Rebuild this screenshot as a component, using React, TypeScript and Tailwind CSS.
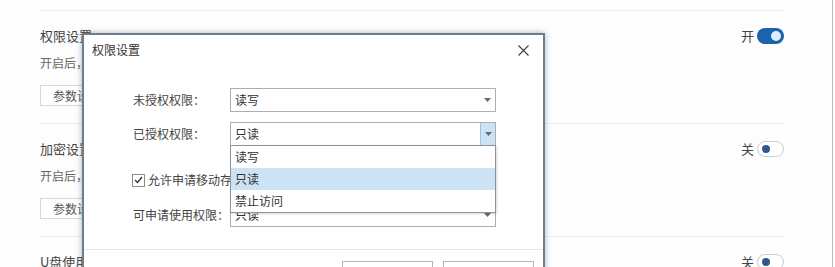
import React from 'react';

interface Section {
  title: string;
  desc: string;
  on: boolean;
  button: boolean;
}

const sections: Section[] = [
  { title: '权限设置', desc: '开启后，将对移动存储设备进行权限控制', on: true, button: true },
  { title: '加密设置', desc: '开启后，将对移动存储设备进行加密', on: false, button: true },
  { title: 'U盘使用', desc: '', on: false, button: false },
];

const Toggle: React.FC<{ on: boolean }> = ({ on }) => (
  <div className="flex items-center gap-[3px] text-[13px] text-[#444]">
    <span>{on ? '开' : '关'}</span>
    {on ? (
      <div className="w-[27px] h-[16px] rounded-full bg-[#1c62ad] flex items-center justify-end pr-[3px]">
        <div className="w-[10px] h-[10px] rounded-full bg-[#dcefff]" />
      </div>
    ) : (
      <div className="w-[27px] h-[16px] rounded-full border border-[#c9ccd0] bg-white flex items-center pl-[4px]">
        <div className="w-[8px] h-[8px] rounded-full bg-[#2c5a8c]" />
      </div>
    )}
  </div>
);

const Arrow: React.FC = () => (
  <svg width="7" height="4" viewBox="0 0 7 4">
    <path d="M0 0 L7 0 L3.5 4 Z" fill="#6b6b6b" />
  </svg>
);

const SelectBox: React.FC<{ value: string; active?: boolean }> = ({ value, active }) => (
  <div className="w-[266px] h-[24px] border border-[#acaeb2] bg-white flex items-center">
    <span className="flex-1 pl-[4px] text-[12px] text-[#333]">{value}</span>
    <div className={`w-[15px] h-full flex items-center justify-center ${active ? 'bg-[#cde3f5] border-l border-[#9fc3e3]' : ''}`}>
      <Arrow />
    </div>
  </div>
);

export default function App() {
  return (
    <div
      className="relative w-[835px] h-[267px] overflow-hidden bg-[#fdfdfd]"
      style={{ fontFamily: '"Noto Sans CJK SC", "Liberation Sans", sans-serif' }}
    >
      {/* background settings list */}
      <div className="w-[833px] h-full border-r border-[#b9bcbf] pt-[10px] pl-[40px]">
        <div className="w-[744px]">
          {sections.map((s, i) => (
            <div key={i} className="border-t border-[#ececec] h-[113px] pt-[15px]">
              <div className="flex items-center justify-between h-[20px]">
                <span className="text-[13px] text-[#444]">{s.title}</span>
                <Toggle on={s.on} />
              </div>
              {s.desc && (
                <div className="mt-[7px] h-[20px] flex items-center text-[12px] text-[#666]">{s.desc}</div>
              )}
              {s.button && (
                <div className="mt-[12px] w-[80px] h-[21px] border border-[#d6d6d6] bg-white flex items-center pl-[12px] text-[12px] text-[#555]">
                  参数设置
                </div>
              )}
            </div>
          ))}
        </div>
      </div>

      {/* dialog */}
      <div className="absolute left-[82px] top-[33px] w-[463px] h-[260px] bg-white border-2 border-[#707d89] shadow-[0_0_6px_rgba(60,90,120,0.45)]">
        <div className="flex items-center justify-between h-[28px] pl-[8px] pr-[14px] mt-[1px]">
          <span className="text-[12px] text-[#333]">权限设置</span>
          <svg width="11" height="11" viewBox="0 0 11 11">
            <path d="M0.5 0.5 L10.5 10.5 M10.5 0.5 L0.5 10.5" stroke="#444" strokeWidth="1.2" />
          </svg>
        </div>

        <div className="relative pl-[49px] pt-[24px] text-[12px] text-[#444]">
          <div className="flex items-center h-[24px]">
            <span className="w-[97px]">未授权权限：</span>
            <SelectBox value="读写" />
          </div>
          <div className="flex items-center h-[24px] mt-[10px]">
            <span className="w-[97px]">已授权权限：</span>
            <SelectBox value="只读" active />
          </div>
          <div className="flex items-center h-[24px] mt-[22px] -ml-[1px]">
            <div className="w-[13px] h-[13px] border border-[#8c8c8c] bg-white flex items-center justify-center">
              <svg width="9" height="8" viewBox="0 0 9 8">
                <path d="M1 4 L3.5 6.5 L8 1" stroke="#333" strokeWidth="1.3" fill="none" />
              </svg>
            </div>
            <span className="ml-[3px]">允许申请移动存储设备使用权限</span>
          </div>
          <div className="flex items-center h-[24px] mt-[11px]">
            <span className="w-[97px]">可申请使用权限：</span>
            <SelectBox value="只读" />
          </div>

          {/* open dropdown list */}
          <div className="absolute left-[146px] top-[81px] w-[266px] border border-[#8f9296] bg-white shadow-[1px_1px_2px_rgba(0,0,0,0.15)]">
            <div className="h-[22px] flex items-center pl-[4px] text-[#333]">读写</div>
            <div className="h-[22px] flex items-center pl-[4px] text-[#333] bg-[#cce3f5]">只读</div>
            <div className="h-[22px] flex items-center pl-[4px] text-[#333]">禁止访问</div>
          </div>
        </div>

        <div className="mt-[22px] border-t border-[#e6e6e6] pt-[11px] flex justify-end gap-[10px] pr-[9px]">
          <div className="w-[91px] h-[28px] border border-[#b5b5b5] bg-white flex items-center justify-center text-[12px] text-[#333]">确定</div>
          <div className="w-[91px] h-[28px] border border-[#b5b5b5] bg-white flex items-center justify-center text-[12px] text-[#333]">取消</div>
        </div>
      </div>
    </div>
  );
}
